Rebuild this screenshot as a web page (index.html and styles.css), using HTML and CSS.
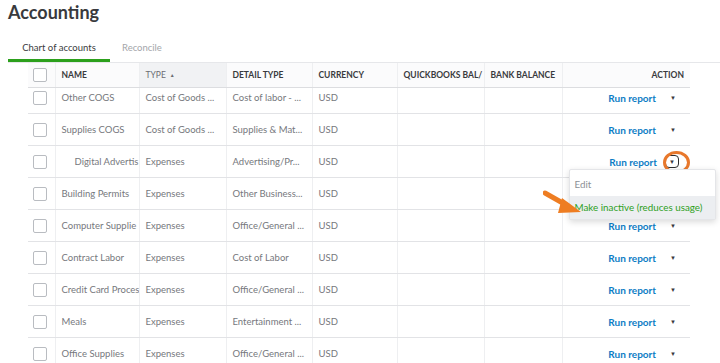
FILE: index.html
```html
<!DOCTYPE html>
<html lang="en">
<head>
  <meta charset="UTF-8" />
  <title>Accounting</title>
  <link rel="stylesheet" href="styles.css">
</head>
<body>

  <h1 class="page-title">Accounting</h1>

  <div class="tabs">
    <a class="tab active">Chart of accounts</a>
    <a class="tab">Reconcile</a>
  </div>

  <div class="coa">
    <div class="coa-row coa-head">
      <div class="cell"><span class="check"></span></div>
      <div class="cell">NAME</div>
      <div class="cell sorted">TYPE <span class="sort">&#9650;</span></div>
      <div class="cell">DETAIL TYPE</div>
      <div class="cell">CURRENCY</div>
      <div class="cell">QUICKBOOKS BAL/</div>
      <div class="cell">BANK BALANCE</div>
      <div class="cell action">ACTION</div>
    </div>

    <div class="coa-body">
      <div class="coa-row first">
        <div class="cell"><span class="check"></span></div>
        <div class="cell">Other COGS</div>
        <div class="cell">Cost of Goods ...</div>
        <div class="cell">Cost of labor - ...</div>
        <div class="cell">USD</div>
        <div class="cell"></div>
        <div class="cell"></div>
        <div class="cell action"><a class="run">Run report</a><span class="caret">&#9660;</span></div>
      </div>
      <div class="coa-row">
        <div class="cell"><span class="check"></span></div>
        <div class="cell">Supplies COGS</div>
        <div class="cell">Cost of Goods ...</div>
        <div class="cell">Supplies &amp; Mat...</div>
        <div class="cell">USD</div>
        <div class="cell"></div>
        <div class="cell"></div>
        <div class="cell action"><a class="run">Run report</a><span class="caret">&#9660;</span></div>
      </div>
      <div class="coa-row">
        <div class="cell"><span class="check"></span></div>
        <div class="cell sub">Digital Advertis</div>
        <div class="cell">Expenses</div>
        <div class="cell">Advertising/Pr...</div>
        <div class="cell">USD</div>
        <div class="cell"></div>
        <div class="cell"></div>
        <div class="cell action open">
          <a class="run">Run report</a><span class="caret boxed">&#9660;</span>
          <span class="ring"></span>
          <div class="menu">
            <div class="menu-item">Edit</div>
            <div class="menu-item hover">Make inactive (reduces usage)</div>
          </div>
          <svg class="pointer" width="40" height="26" viewBox="0 0 40 26">
            <path d="M2 3 L25 16" stroke="#ee7d22" stroke-width="5" stroke-linecap="round" fill="none"/>
            <path d="M19 8 L38 22 L15 23 Z" fill="#ee7d22"/>
          </svg>
        </div>
      </div>
      <div class="coa-row">
        <div class="cell"><span class="check"></span></div>
        <div class="cell">Building Permits</div>
        <div class="cell">Expenses</div>
        <div class="cell">Other Business...</div>
        <div class="cell">USD</div>
        <div class="cell"></div>
        <div class="cell"></div>
        <div class="cell action"><a class="run">Run report</a><span class="caret">&#9660;</span></div>
      </div>
      <div class="coa-row">
        <div class="cell"><span class="check"></span></div>
        <div class="cell">Computer Supplie</div>
        <div class="cell">Expenses</div>
        <div class="cell">Office/General ...</div>
        <div class="cell">USD</div>
        <div class="cell"></div>
        <div class="cell"></div>
        <div class="cell action"><a class="run">Run report</a><span class="caret">&#9660;</span></div>
      </div>
      <div class="coa-row">
        <div class="cell"><span class="check"></span></div>
        <div class="cell">Contract Labor</div>
        <div class="cell">Expenses</div>
        <div class="cell">Cost of Labor</div>
        <div class="cell">USD</div>
        <div class="cell"></div>
        <div class="cell"></div>
        <div class="cell action"><a class="run">Run report</a><span class="caret">&#9660;</span></div>
      </div>
      <div class="coa-row">
        <div class="cell"><span class="check"></span></div>
        <div class="cell">Credit Card Proces</div>
        <div class="cell">Expenses</div>
        <div class="cell">Office/General ...</div>
        <div class="cell">USD</div>
        <div class="cell"></div>
        <div class="cell"></div>
        <div class="cell action"><a class="run">Run report</a><span class="caret">&#9660;</span></div>
      </div>
      <div class="coa-row">
        <div class="cell"><span class="check"></span></div>
        <div class="cell">Meals</div>
        <div class="cell">Expenses</div>
        <div class="cell">Entertainment ...</div>
        <div class="cell">USD</div>
        <div class="cell"></div>
        <div class="cell"></div>
        <div class="cell action"><a class="run">Run report</a><span class="caret">&#9660;</span></div>
      </div>
      <div class="coa-row">
        <div class="cell"><span class="check"></span></div>
        <div class="cell">Office Supplies</div>
        <div class="cell">Expenses</div>
        <div class="cell">Office/General ...</div>
        <div class="cell">USD</div>
        <div class="cell"></div>
        <div class="cell"></div>
        <div class="cell action"><a class="run">Run report</a><span class="caret">&#9660;</span></div>
      </div>
    </div>
  </div>

</body>
</html>
```

FILE: styles.css
```css
html {
  overflow: hidden;
}
body {
  margin: 0;
  padding: 0 8px;
  font-family: Lato, "Open Sans", sans-serif;
  background-color: #fff;
  color: #393a3d;
}
.page-title {
  margin: 0;
  padding-top: 1px;
  font-size: 18px;
  line-height: 22px;
  font-weight: 700;
  color: #393a3d;
}
.tabs {
  display: flex;
  margin-top: 14px;
  margin-right: -8px;
  border-bottom: 1px solid #e6e7ea;
}
.tab {
  width: 102px;
  height: 25px;
  line-height: 22px;
  font-size: 9.5px;
  text-align: center;
  color: #393a3d;
  box-sizing: border-box;
}
.tab + .tab {
  width: auto;
  padding: 0 12px;
  color: #a4a6aa;
}
.tab.active {
  border-bottom: 3px solid #2ca01c;
}

.coa {
  margin-left: 20px;
  width: 662px;
}
.coa-row {
  display: grid;
  grid-template-columns: 26.5px 84px 87px 86px 85px 87px 78px 128.5px;
  height: 32px;
  border-bottom: 1px solid #e2e3e6;
  box-sizing: border-box;
  font-size: 9.5px;
  color: #76787d;
}
.coa-head {
  position: relative;
  z-index: 2;
  height: 25px;
  background-color: #fbfbfc;
  border-bottom-color: #dcdde0;
  font-size: 8.5px;
  font-weight: 700;
  color: #393a3d;
}
.cell {
  display: flex;
  align-items: center;
  padding-left: 6px;
  white-space: nowrap;
  overflow: hidden;
  border-left: 1px solid #eeeff1;
}
.cell:first-child {
  border-left: none;
  padding-left: 5px;
}
.cell.sub {
  padding-left: 19px;
}
.coa-head .cell.sorted {
  background-color: #f1f2f4;
  font-weight: 400;
  color: #6b6c72;
}
.sort {
  font-size: 5px;
  margin-left: 4px;
}
.coa-head .cell.action {
  justify-content: flex-end;
  padding-right: 6px;
}
.coa-row.first {
  margin-top: -6px;
}
.check {
  width: 14px;
  height: 14px;
  border: 1px solid #b9bcc1;
  border-radius: 2px;
  box-sizing: border-box;
  background-color: #fff;
}
.cell.action {
  position: relative;
  justify-content: flex-end;
  padding-right: 14px;
  overflow: visible;
}
.run {
  color: #0d7dc5;
  font-weight: 700;
  font-size: 10px;
}
.caret {
  margin-left: 14px;
  font-size: 6px;
  color: #393a3d;
}
.caret.boxed {
  padding: 2px 3px;
  margin-left: 8px;
  margin-right: -3px;
  border: 1.5px solid #2b2c2f;
  border-radius: 4px;
}
.ring {
  position: absolute;
  left: 100px;
  top: 5px;
  width: 27px;
  height: 23px;
  border: 3px solid #e8782c;
  border-radius: 50%;
  box-sizing: border-box;
}
.menu {
  position: absolute;
  z-index: 3;
  left: 6px;
  top: 23px;
  width: 145px;
  padding: 3px 0 0;
  background-color: #fff;
  border: 1px solid #e4e5e8;
  border-radius: 2px;
  box-shadow: 0 2px 6px rgba(0, 0, 0, 0.15);
}
.menu-item {
  padding: 0 5px;
  height: 23px;
  line-height: 23px;
  font-size: 9.8px;
  color: #8d9096;
}
.menu-item.hover {
  background-color: #eceef1;
  color: #2ca01c;
}
.pointer {
  position: absolute;
  z-index: 4;
  left: -20px;
  top: 44px;
}
```
